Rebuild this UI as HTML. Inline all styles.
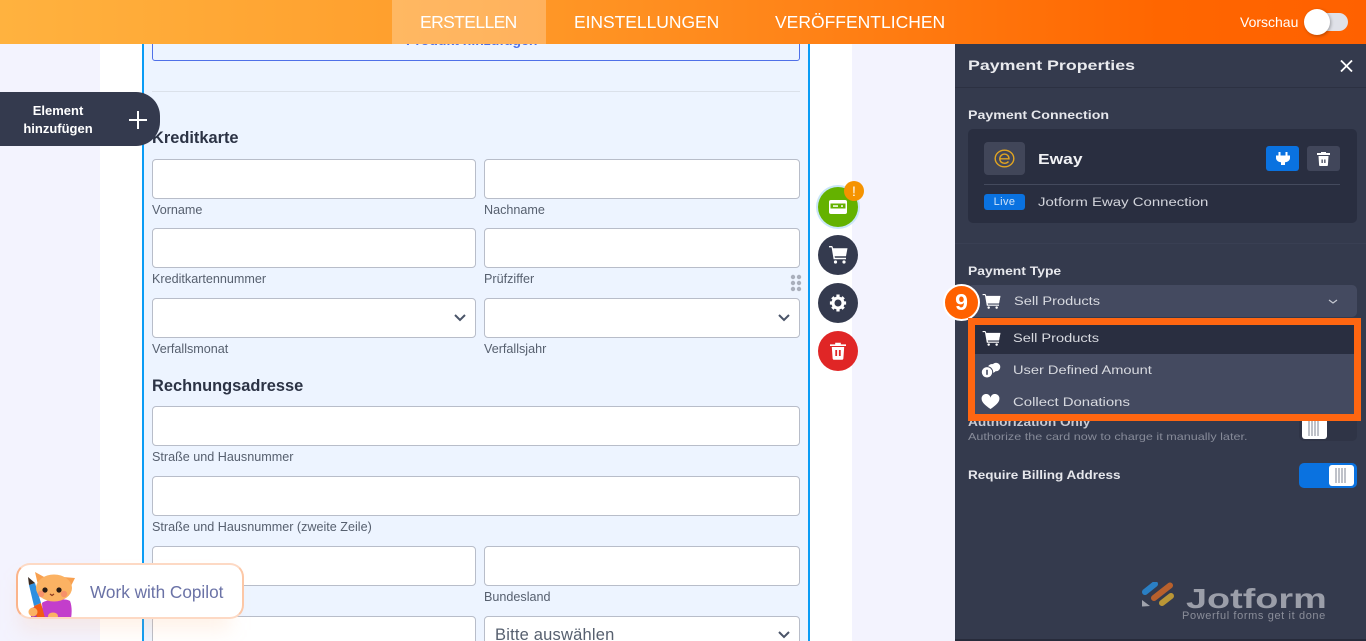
<!DOCTYPE html>
<html><head><meta charset="utf-8"><style>
html,body{margin:0;padding:0;width:1366px;height:641px;overflow:hidden}
body{position:relative;background:#f3f3fe;font-family:"Liberation Sans",sans-serif;color:#2c3345}
div,span{position:absolute;box-sizing:border-box}
.t{white-space:nowrap;line-height:1}
.in{background:#fff;border:1px solid #b8bdc9;border-radius:4px}
.lb{font-size:12.6px;color:#57606f;white-space:nowrap;line-height:14px}
.h{font-weight:700;font-size:16.4px;color:#2c3345;white-space:nowrap;line-height:18px}
.nav{font-size:17.5px;color:#fff;top:12px;line-height:20px;white-space:nowrap}
.w{color:#e6e7ec;white-space:nowrap;line-height:14px;font-size:11.5px;transform-origin:0 50%}
.b{font-weight:700}
.rc{width:40px;height:40px;border-radius:50%;left:818px}
svg{position:absolute;display:block}
</style></head><body>
<div id="root" style="left:0;top:0;width:1366px;height:641px;overflow:hidden">
<div style="left:100px;top:44px;width:752px;height:597px;background:#fff"></div>
<div style="left:142px;top:30px;width:668px;height:620px;background:#edf4ff;border-left:2px solid #0a9cf5;border-right:2px solid #0a9cf5"></div>
<div style="left:152px;top:30px;width:648px;height:31px;border:1px solid #4f70e8;border-radius:3px"></div>
<div class="t" style="left:406px;top:33px;font-size:14px;font-weight:700;color:#4f70e8">Produkt hinzufügen</div>
<div style="left:152px;top:91px;width:648px;height:1px;background:#dbe1ea"></div>

<div class="h" style="left:152px;top:129px">Kreditkarte</div>
<div class="in" style="left:152px;top:159px;width:324px;height:40px"></div>
<div class="in" style="left:484px;top:159px;width:316px;height:40px"></div>
<div class="lb" style="left:152px;top:203px">Vorname</div>
<div class="lb" style="left:484px;top:203px">Nachname</div>
<div class="in" style="left:152px;top:228px;width:324px;height:40px"></div>
<div class="in" style="left:484px;top:228px;width:316px;height:40px"></div>
<div class="lb" style="left:152px;top:272px">Kreditkartennummer</div>
<div class="lb" style="left:484px;top:272px">Prüfziffer</div>
<div class="in" style="left:152px;top:298px;width:324px;height:40px"></div>
<div class="in" style="left:484px;top:298px;width:316px;height:40px"></div>
<svg style="left:453px;top:313px" width="14" height="10" viewBox="0 0 14 10"><path d="M2 2l5 5 5-5" fill="none" stroke="#4a5468" stroke-width="2"/></svg>
<svg style="left:777px;top:313px" width="14" height="10" viewBox="0 0 14 10"><path d="M2 2l5 5 5-5" fill="none" stroke="#4a5468" stroke-width="2"/></svg>
<div class="lb" style="left:152px;top:342px">Verfallsmonat</div>
<div class="lb" style="left:484px;top:342px">Verfallsjahr</div>
<svg style="left:790px;top:274px" width="12" height="18" viewBox="0 0 12 18" fill="#a9afbc"><circle cx="3" cy="3" r="2.2"/><circle cx="9" cy="3" r="2.2"/><circle cx="3" cy="9" r="2.2"/><circle cx="9" cy="9" r="2.2"/><circle cx="3" cy="15" r="2.2"/><circle cx="9" cy="15" r="2.2"/></svg>

<div class="h" style="left:152px;top:377px">Rechnungsadresse</div>
<div class="in" style="left:152px;top:406px;width:648px;height:40px"></div>
<div class="lb" style="left:152px;top:450px">Straße und Hausnummer</div>
<div class="in" style="left:152px;top:476px;width:648px;height:40px"></div>
<div class="lb" style="left:152px;top:520px">Straße und Hausnummer (zweite Zeile)</div>
<div class="in" style="left:152px;top:546px;width:324px;height:40px"></div>
<div class="in" style="left:484px;top:546px;width:316px;height:40px"></div>
<div class="lb" style="left:484px;top:590px">Bundesland</div>
<div class="in" style="left:152px;top:616px;width:324px;height:40px"></div>
<div class="in" style="left:484px;top:616px;width:316px;height:40px"></div>
<div class="t" style="left:495px;top:627px;font-size:16.5px;color:#57606f;letter-spacing:.2px">Bitte auswählen</div>
<svg style="left:777px;top:630px" width="14" height="10" viewBox="0 0 14 10"><path d="M2 2l5 5 5-5" fill="none" stroke="#4a5468" stroke-width="2"/></svg>

<!-- round buttons -->
<div class="rc" style="left:816px;top:185px;width:44px;height:44px;background:#c9e6f7"></div>
<div class="rc" style="top:187px;background:#64b200"></div>
<svg style="left:829px;top:200px" width="18" height="14" viewBox="0 0 18 14"><rect width="18" height="14" rx="2" fill="#fff"/><rect x="1.500" y="3.500" width="15" height="5" fill="#64b200"/><rect x="4" y="5.300" width="5" height="1.500" fill="#fff"/><rect x="12" y="5.300" width="2" height="1.500" fill="#fff"/></svg>
<div style="left:844px;top:181px;width:20px;height:20px;border-radius:50%;background:#f59300;color:#fff;font-size:14px;text-align:center;line-height:20px">!</div>
<div class="rc" style="top:235px;background:#343a4e"></div>
<svg style="left:829px;top:246px" width="19" height="18" viewBox="0 0 19 18" fill="#fff"><path d="M0 0h3.200l1 2.200H18.500l-1.500 8H5.600l.3 1.600H17v1.400H4.600L2.600 1.400H0z"/><circle cx="6.500" cy="16" r="1.600"/><circle cx="15" cy="16" r="1.600"/></svg>
<div class="rc" style="top:283px;background:#343a4e"></div>
<svg style="left:829px;top:294px" width="18" height="18" viewBox="0 0 18 18"><path d="M9 .5v4M9 13.500v4M.9 9h4M13.100 9h4M3.300 3.300l2.600 2.600M12.100 12.100l2.600 2.600M14.700 3.300l-2.600 2.600M5.900 12.100l-2.600 2.600" stroke="#fff" stroke-width="3.200"/><circle cx="9" cy="9" r="5" fill="none" stroke="#fff" stroke-width="3"/></svg>
<div class="rc" style="top:331px;background:#e02626"></div>
<svg style="left:830px;top:342px" width="16" height="18" viewBox="0 0 16 18" fill="#fff"><path d="M0 2.400h5.200V.8h5.600v1.600H16V4H0z"/><path d="M1.800 5h12.400l-.8 11.200a1.800 1.800 0 0 1-1.800 1.600H4.400a1.800 1.800 0 0 1-1.800-1.600z"/><rect x="5.300" y="8" width="1.800" height="6" fill="#e02626"/><rect x="8.900" y="8" width="1.800" height="6" fill="#e02626"/></svg>

<!-- header -->
<div style="left:0;top:0;width:1366px;height:44px;background:linear-gradient(90deg,#ffb23f 0%,#ff9c2a 35%,#ff8418 58%,#ff6600 85%,#ff6100 100%)"></div>
<div style="left:392px;top:0;width:154px;height:44px;background:rgba(255,255,255,.25)"></div>
<div class="nav" style="left:420px;letter-spacing:-.6px">ERSTELLEN</div>
<div class="nav" style="left:574px;letter-spacing:-.05px">EINSTELLUNGEN</div>
<div class="nav" style="left:775px">VERÖFFENTLICHEN</div>
<div class="t" style="left:1240px;top:15px;font-size:14px;color:#fff">Vorschau</div>
<div style="left:1308px;top:13px;width:40px;height:18px;border-radius:9px;background:#dfe1e8"></div>
<div style="left:1304px;top:9px;width:26px;height:26px;border-radius:50%;background:#fff;box-shadow:1px 1px 3px rgba(0,0,0,.3)"></div>

<!-- add element -->
<div style="left:0;top:92px;width:160px;height:54px;background:#343a4e;border-radius:0 24px 24px 0"></div>
<div class="t" style="left:0;top:102px;width:116px;text-align:center;font-size:13px;font-weight:700;color:#fff;line-height:18px;white-space:normal">Element<br>hinzufügen</div>
<svg style="left:128px;top:110px" width="20" height="20" viewBox="0 0 20 20"><path d="M10 1v18M1 10h18" stroke="#fff" stroke-width="2"/></svg>

<!-- copilot -->
<div style="left:20px;top:580px;width:210px;height:50px;background:rgba(255,160,90,.14);filter:blur(10px)"></div>
<div style="left:16px;top:563px;width:228px;height:56px;background:#fff;border:2px solid #fdd9c4;border-left-color:#fbb48a;border-right-color:#fcc7a6;border-radius:14px"></div>
<svg style="left:26px;top:571px" width="50" height="46" viewBox="0 0 50 46">
<path d="M16 32c4-4 24-5 28-2 2 5 2 12 1 17H17z" fill="#c33ecb"/>
<path d="M5 38c2-3 8-3 9 0l3 9H5z" fill="#a534b8"/>
<path d="M3 14l6-2 6 20-7 3z" fill="#2e8fe0"/>
<path d="M8 35l7-3 4 15H11z" fill="#f25c14"/>
<path d="M3 14l-1-8 7 6z" fill="#3a2a20"/>
<path d="M9 1l11 6-8 7zM49 7l-12-1 7 11z" fill="#f8a04f"/>
<ellipse cx="28" cy="17" rx="18" ry="13.500" fill="#fbb263"/>
<circle cx="19" cy="19" r="2.600" fill="#2a1c16"/><circle cx="33" cy="19" r="2.600" fill="#2a1c16"/>
<circle cx="15" cy="23" r="3.200" fill="#f5806e" opacity=".65"/><circle cx="38" cy="23" r="3.200" fill="#f5806e" opacity=".65"/>
<path d="M24 23l2 1.500 2-1.500" fill="none" stroke="#8a3a20" stroke-width="1.200"/>
<circle cx="7" cy="41" r="4.500" fill="#fbb263"/><ellipse cx="27" cy="45" rx="5" ry="3.500" fill="#fbb263"/>
</svg>
<div class="t" style="left:90px;top:584px;font-size:17.2px;color:#6a72a6">Work with Copilot</div>

<!-- panel -->
<div style="left:955px;top:44px;width:411px;height:597px;background:#343a4d"></div>
<div style="left:955px;top:87px;width:411px;height:1px;background:#2c3142"></div>
<div class="w b" style="left:968px;top:58px;font-size:14px;transform:scaleX(1.27);color:#e9eaee">Payment Properties</div>
<svg style="left:1340px;top:60px" width="13" height="12" viewBox="0 0 13 12"><path d="M1 .5l11 11M12 .5l-11 11" stroke="#fff" stroke-width="1.800"/></svg>
<div class="w b" style="left:968px;top:109px;transform:scaleX(1.233)">Payment Connection</div>
<div style="left:968px;top:129px;width:389px;height:94px;background:#292e40;border-radius:5px"></div>
<div style="left:984px;top:142px;width:41px;height:33px;background:#414659;border-radius:4px"></div>
<svg style="left:994px;top:149px" width="21" height="19" viewBox="0 0 21 19" fill="none" stroke="#e0a422"><ellipse cx="10.500" cy="9.500" rx="9.300" ry="8.300" stroke-width="1.400"/><path d="M5.500 9.800h9.500c0-3-2-4.700-4.500-4.700s-4.700 2-4.700 4.700 2 4.500 4.700 4.500c1.600 0 3-.6 4-1.800" stroke-width="1.400"/></svg>
<div class="w b" style="left:1038px;top:152px;font-size:14.500px;transform:scaleX(1.2);line-height:16px;color:#f1f2f5">Eway</div>
<div style="left:1266px;top:146px;width:33px;height:25px;background:#0a72e0;border-radius:3px"></div>
<svg style="left:1276px;top:152px" width="14" height="13" viewBox="0 0 14 13" fill="#fff"><rect x="2.500" y="0" width="2" height="4"/><rect x="9.500" y="0" width="2" height="4"/><path d="M0 3.500h14v2.500c0 2.500-2.500 4-5 4.300V13H5v-2.700C2.500 10 0 8.500 0 6z"/></svg>
<div style="left:1307px;top:146px;width:33px;height:25px;background:#41465a;border-radius:3px"></div>
<svg style="left:1317px;top:152px" width="13" height="14" viewBox="0 0 13 14" fill="#fff"><rect x="0" y="1" width="13" height="2"/><rect x="4" y="0" width="5" height="2"/><path d="M1.500 4h10l-.6 9.300a.8.8 0 0 1-.8.700H2.900a.8.8 0 0 1-.8-.7z"/><rect x="4.500" y="7.500" width="1.300" height="3.500" fill="#41465a"/><rect x="7.200" y="7.500" width="1.300" height="3.500" fill="#41465a"/></svg>
<div style="left:984px;top:184px;width:356px;height:1px;background:#444a5d"></div>
<div style="left:984px;top:194px;width:41px;height:16px;background:#0a72e0;border-radius:3px;color:#cfe3fa;font-size:11px;text-align:center;line-height:16px;letter-spacing:.4px">Live</div>
<div class="w" style="left:1038px;top:196px;transform:scaleX(1.3);color:#d3d5dc">Jotform Eway Connection</div>
<div style="left:955px;top:243px;width:411px;height:1px;background:#393f53"></div>
<div class="w b" style="left:968px;top:265px;transform:scaleX(1.208)">Payment Type</div>
<div style="left:968px;top:285px;width:389px;height:32px;background:#444a60;border-radius:5px"></div>
<svg style="left:982px;top:294px" width="19" height="15" viewBox="0 0 19 16" fill="#fff"><path d="M0 0h3l1.200 2.500H19l-1.500 7.500H5.500l.3 1.300H17.500v1.200H4.500L2.500 1.200H0z"/><path d="M4 2h15l-1.500 8H5.500z"/><circle cx="6.500" cy="14.500" r="1.300"/><circle cx="15" cy="14.500" r="1.300"/></svg>
<div class="w" style="left:1014px;top:295px;transform:scaleX(1.27);color:#d8dae0">Sell Products</div>
<svg style="left:1328px;top:299px" width="10" height="6" viewBox="0 0 10 6"><path d="M1 1l4 3 4-3" fill="none" stroke="#c6c9d2" stroke-width="1.200"/></svg>
<div style="left:943px;top:284px;width:37px;height:37px;border-radius:50%;background:#ff6100;border:2px solid #fff;color:#fff;font-size:23px;font-weight:700;text-align:center;line-height:32px">9</div>

<div class="w b" style="left:968px;top:416px;transform:scaleX(1.19);color:#c9cbd3">Authorization Only</div>
<div style="left:968px;top:318px;width:393px;height:103px;background:#ff6611"></div>
<div style="left:975px;top:325px;width:379px;height:89px;background:#444a60"></div>
<div style="left:975px;top:325px;width:379px;height:29px;background:#292e40"></div>
<svg style="left:982px;top:331px" width="19" height="15" viewBox="0 0 19 16" fill="#fff"><path d="M0 0h3l1.200 2.500H19l-1.500 7.500H5.500l.3 1.300H17.500v1.200H4.500L2.500 1.200H0z"/><path d="M4 2h15l-1.500 8H5.500z"/><circle cx="6.500" cy="14.500" r="1.300"/><circle cx="15" cy="14.500" r="1.300"/></svg>
<div class="w" style="left:1013px;top:332px;transform:scaleX(1.27);color:#d8dae0">Sell Products</div>
<svg style="left:980px;top:362px" width="21" height="16" viewBox="0 0 21 16"><circle cx="16" cy="5" r="4.300" fill="#fff"/><circle cx="12" cy="6.500" r="4.500" fill="#fff"/><circle cx="7" cy="10.300" r="5.700" fill="#fff" stroke="#444a60"/><rect x="6.200" y="7.800" width="1.600" height="5" fill="#444a60"/></svg>
<div class="w" style="left:1013px;top:364px;transform:scaleX(1.27);color:#d8dae0">User Defined Amount</div>
<svg style="left:981px;top:394px" width="19" height="15" viewBox="0 0 19 16"><path d="M9.500 16C4 12 0 9 0 5a4.800 4.800 0 0 1 9.500-1.200A4.800 4.800 0 0 1 19 5c0 4-4 7-9.500 11z" fill="#fff"/></svg>
<div class="w" style="left:1013px;top:396px;transform:scaleX(1.297);color:#d8dae0">Collect Donations</div>

<div class="w" style="left:968px;top:430px;font-size:10.500px;transform:scaleX(1.2);color:#878b99">Authorize the card now to charge it manually later.</div>
<div style="left:1299px;top:421px;width:58px;height:20px;background:#2f3446;border-radius:0 0 5px 5px"></div>
<div style="left:1302px;top:421px;width:25px;height:18px;background:#fff;border-radius:0 0 3px 3px"></div>
<svg style="left:1308px;top:421px" width="13" height="15"><path d="M1 0v15M4 0v15M7 0v15M10 0v15" stroke="#aaadb7" stroke-width="1.500"/></svg>
<div class="w b" style="left:968px;top:469px;transform:scaleX(1.174)">Require Billing Address</div>
<div style="left:1299px;top:463px;width:58px;height:25px;background:#0a72e0;border-radius:5px"></div>
<div style="left:1329px;top:465px;width:25px;height:21px;background:#fff;border-radius:3px"></div>
<svg style="left:1335px;top:468px" width="13" height="15"><path d="M1 0v15M4 0v15M7 0v15M10 0v15" stroke="#aaadb7" stroke-width="1.500"/></svg>

<!-- logo -->
<svg style="left:1140px;top:582px" width="38" height="30" viewBox="0 0 38 30">
<path d="M5 10L15 2" stroke="#2a7fc4" stroke-width="6" stroke-linecap="round"/>
<path d="M14 16L30 3.500" stroke="#b8602c" stroke-width="6" stroke-linecap="round"/>
<path d="M22 21L31 14" stroke="#ba9636" stroke-width="6" stroke-linecap="round"/>
<path d="M2 18l8 6-8 .5z" fill="#a0a3ad"/></svg>
<div class="t b" style="left:1186px;top:585px;font-size:28px;color:#9b9ea9;transform:scaleX(1.35);transform-origin:0 0">Jotform</div>
<div class="t" style="left:1182px;top:611px;font-size:11px;color:#8b8e9a;letter-spacing:.62px">Powerful forms get it done</div>
<div style="left:955px;top:639px;width:411px;height:2px;background:#272b3b"></div>
</div>
</body></html>
